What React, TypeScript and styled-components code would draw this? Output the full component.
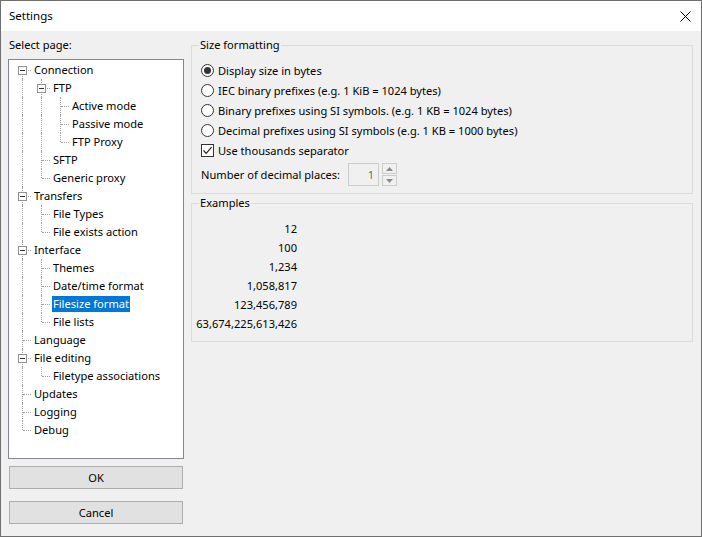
import React from 'react';
import styled, { createGlobalStyle } from 'styled-components';

type TreeNode = {
    label: string;
    children?: TreeNode[];
};

type FlatRow = {
    label: string;
    level: number;
    guides: boolean[];
    first: boolean;
    last: boolean;
    expandable: boolean;
};

const GlobalStyle = createGlobalStyle`
    html, body {
        margin: 0;
        padding: 0;
        background: #ffffff;
    }
    body {
        font-family: "Segoe UI", "Noto Sans", "Open Sans", sans-serif;
        font-size: 11.1px;
        color: #000000;
    }
`;

const Window = styled.div`
    width: 702px;
    height: 537px;
    box-sizing: border-box;
    border: 1px solid #6f6f6f;
    background: #f0f0f0;
    display: flex;
    flex-direction: column;
`;

const TitleBar = styled.div`
    height: 30px;
    background: #ffffff;
    display: flex;
    align-items: center;
    justify-content: space-between;
    padding: 0 10px 0 8px;
    flex-shrink: 0;
`;

const Title = styled.span`
    font-size: 11.5px;
    line-height: 16px;
`;

const CloseButton = styled.div`
    width: 12px;
    height: 12px;
    display: flex;
    align-items: center;
    justify-content: center;
`;

const Body = styled.div`
    flex: 1;
    display: flex;
    gap: 7px;
    padding: 6px 8px 0 7px;
`;

const LeftColumn = styled.div`
    width: 176px;
    display: flex;
    flex-direction: column;
`;

const Label = styled.div`
    line-height: 16px;
    margin: 0 0 6px 1px;
`;

const TreeBox = styled.div`
    height: 400px;
    box-sizing: border-box;
    border: 1px solid #828790;
    background: #ffffff;
    padding-top: 1px;
    overflow: hidden;
`;

const TreeRow = styled.div`
    display: flex;
    height: 18px;
    padding-left: 3px;
`;

const GuideCell = styled.div<{ $line: boolean }>`
    width: 19px;
    height: 18px;
    flex-shrink: 0;
    position: relative;

    &::before {
        content: '';
        display: ${(props) => (props.$line ? 'block' : 'none')};
        position: absolute;
        left: 10px;
        top: 0;
        bottom: 0;
        border-left: 1px dotted #a0a0a0;
    }
`;

const BranchCell = styled.div<{ $first: boolean; $last: boolean }>`
    width: 19px;
    height: 18px;
    flex-shrink: 0;
    position: relative;

    &::before {
        content: '';
        position: absolute;
        left: 10px;
        top: ${(props) => (props.$first ? '9px' : '0')};
        height: ${(props) => (props.$last || props.$first ? '9px' : '18px')};
        border-left: 1px dotted #a0a0a0;
    }

    &::after {
        content: '';
        position: absolute;
        left: 11px;
        right: 0;
        top: 9px;
        border-top: 1px dotted #a0a0a0;
    }
`;

const Expander = styled.div`
    position: absolute;
    left: 6px;
    top: 5px;
    width: 9px;
    height: 9px;
    box-sizing: border-box;
    border: 1px solid #919191;
    background: #ffffff;
    z-index: 1;

    &::after {
        content: '';
        position: absolute;
        left: 1px;
        right: 1px;
        top: 3px;
        border-top: 1px solid #333333;
    }
`;

const NodeLabel = styled.span<{ $selected: boolean }>`
    margin-left: 2px;
    padding: 0 1px;
    height: 16px;
    line-height: 16px;
    align-self: center;
    white-space: nowrap;
    background: ${(props) => (props.$selected ? '#0078d7' : 'transparent')};
    color: ${(props) => (props.$selected ? '#ffffff' : '#000000')};
`;

const DialogButton = styled.button<{ $gap: number }>`
    margin: ${(props) => props.$gap}px 1px 0 1px;
    height: 23px;
    border: 1px solid #adadad;
    background: #e1e1e1;
    font-family: inherit;
    font-size: 11.1px;
    color: #000000;
    padding: 0;
`;

const RightColumn = styled.div`
    flex: 1;
    display: flex;
    flex-direction: column;
`;

const Group = styled.fieldset<{ $bottom: number; $top: number }>`
    margin: ${(props) => props.$top}px 0 0 0;
    min-width: 0;
    border: 1px solid #dcdcdc;
    padding: 0 0 ${(props) => props.$bottom}px 9px;
`;

const Legend = styled.legend`
    padding: 0 1px;
    margin-left: -2px;
    line-height: 16px;
    font-size: 11.1px;
`;

const Options = styled.div`
    display: flex;
    flex-direction: column;
    padding-top: 7px;
`;

const OptionRow = styled.div<{ $height: number }>`
    display: flex;
    align-items: center;
    gap: 4px;
    height: ${(props) => props.$height}px;
    white-space: nowrap;
`;

const Radio = styled.span<{ $checked: boolean }>`
    width: 13px;
    height: 13px;
    flex-shrink: 0;
    box-sizing: border-box;
    border: 1px solid #333333;
    border-radius: 50%;
    background: #ffffff;
    display: flex;
    align-items: center;
    justify-content: center;

    &::after {
        content: '';
        display: ${(props) => (props.$checked ? 'block' : 'none')};
        width: 7px;
        height: 7px;
        border-radius: 50%;
        background: #333333;
    }
`;

const Checkbox = styled.span`
    width: 13px;
    height: 13px;
    flex-shrink: 0;
    box-sizing: border-box;
    border: 1px solid #333333;
    background: #ffffff;
    display: flex;
    align-items: center;
    justify-content: center;
`;

const SpinRow = styled.div`
    display: flex;
    align-items: center;
    height: 23px;
    margin-top: 2px;
`;

const SpinLabel = styled.span`
    width: 147px;
    white-space: nowrap;
`;

const SpinInput = styled.div`
    width: 31px;
    height: 23px;
    box-sizing: border-box;
    border: 1px solid #cccccc;
    background: #f0f0f0;
    color: #6d6d6d;
    text-align: right;
    padding-right: 4px;
    line-height: 21px;
`;

const SpinButtons = styled.div`
    display: flex;
    flex-direction: column;
    gap: 1px;
    margin-left: 3px;
`;

const SpinButton = styled.div`
    width: 15px;
    height: 11px;
    box-sizing: border-box;
    border: 1px solid #cccccc;
    background: #f0f0f0;
    display: flex;
    align-items: center;
    justify-content: center;
`;

const ExampleList = styled.div`
    width: 96px;
    padding-top: 8px;
    display: flex;
    flex-direction: column;
    align-items: flex-end;
`;

const ExampleValue = styled.div`
    height: 19px;
    line-height: 19px;
    white-space: nowrap;
`;

const tree: TreeNode[] = [
    {
        label: 'Connection',
        children: [
            { label: 'FTP', children: [{ label: 'Active mode' }, { label: 'Passive mode' }, { label: 'FTP Proxy' }] },
            { label: 'SFTP' },
            { label: 'Generic proxy' },
        ],
    },
    { label: 'Transfers', children: [{ label: 'File Types' }, { label: 'File exists action' }] },
    {
        label: 'Interface',
        children: [
            { label: 'Themes' },
            { label: 'Date/time format' },
            { label: 'Filesize format' },
            { label: 'File lists' },
        ],
    },
    { label: 'Language' },
    { label: 'File editing', children: [{ label: 'Filetype associations' }] },
    { label: 'Updates' },
    { label: 'Logging' },
    { label: 'Debug' },
];

// walks the tree and records, for each row, which ancestor guide lines keep going
const flatten = (nodes: TreeNode[], level: number, guides: boolean[], rows: FlatRow[]) => {
    nodes.forEach((node, i) => {
        const last = i === nodes.length - 1;
        rows.push({
            label: node.label,
            level,
            guides,
            first: level === 0 && i === 0,
            last,
            expandable: !!node.children,
        });
        if (node.children) {
            flatten(node.children, level + 1, guides.concat(!last), rows);
        }
    });
    return rows;
};

const rows = flatten(tree, 0, [], []);

const sizeOptions = [
    'Display size in bytes',
    'IEC binary prefixes (e.g. 1 KiB = 1024 bytes)',
    'Binary prefixes using SI symbols. (e.g. 1 KB = 1024 bytes)',
    'Decimal prefixes using SI symbols (e.g. 1 KB = 1000 bytes)',
];

const examples = ['12', '100', '1,234', '1,058,817', '123,456,789', '63,674,225,613,426'];

const App = () => {
    const selected = 'Filesize format';

    return (
        <>
            <GlobalStyle />
            <Window>
                <TitleBar>
                    <Title>Settings</Title>
                    <CloseButton>
                        <svg width="11" height="11" viewBox="0 0 11 11">
                            <path d="M0.5 0.5 L10.5 10.5 M10.5 0.5 L0.5 10.5" stroke="#000" strokeWidth="1" fill="none" />
                        </svg>
                    </CloseButton>
                </TitleBar>
                <Body>
                    <LeftColumn>
                        <Label>Select page:</Label>
                        <TreeBox>
                            {rows.map((row) => (
                                <TreeRow key={row.label}>
                                    {row.guides.map((g, i) => (
                                        <GuideCell key={i} $line={g} />
                                    ))}
                                    <BranchCell $first={row.first} $last={row.last}>
                                        {row.expandable && <Expander />}
                                    </BranchCell>
                                    <NodeLabel $selected={row.label === selected}>{row.label}</NodeLabel>
                                </TreeRow>
                            ))}
                        </TreeBox>
                        <DialogButton $gap={7}>OK</DialogButton>
                        <DialogButton $gap={12}>Cancel</DialogButton>
                    </LeftColumn>
                    <RightColumn>
                        <Group $top={0} $bottom={7}>
                            <Legend>Size formatting</Legend>
                            <Options>
                                {sizeOptions.map((opt, i) => (
                                    <OptionRow key={opt} $height={20}>
                                        <Radio $checked={i === 0} />
                                        <span>{opt}</span>
                                    </OptionRow>
                                ))}
                                <OptionRow $height={21}>
                                    <Checkbox>
                                        <svg width="11" height="11" viewBox="0 0 11 11">
                                            <path d="M1.5 5.5 L4.2 8.3 L9.6 2.2" stroke="#222" strokeWidth="1.2" fill="none" />
                                        </svg>
                                    </Checkbox>
                                    <span>Use thousands separator</span>
                                </OptionRow>
                                <SpinRow>
                                    <SpinLabel>Number of decimal places:</SpinLabel>
                                    <SpinInput>1</SpinInput>
                                    <SpinButtons>
                                        <SpinButton>
                                            <svg width="7" height="4" viewBox="0 0 7 4">
                                                <path d="M0 4 L3.5 0 L7 4 Z" fill="#8a8a8a" />
                                            </svg>
                                        </SpinButton>
                                        <SpinButton>
                                            <svg width="7" height="4" viewBox="0 0 7 4">
                                                <path d="M0 0 L7 0 L3.5 4 Z" fill="#8a8a8a" />
                                            </svg>
                                        </SpinButton>
                                    </SpinButtons>
                                </SpinRow>
                            </Options>
                        </Group>
                        <Group $top={1} $bottom={8}>
                            <Legend>Examples</Legend>
                            <ExampleList>
                                {examples.map((ex) => (
                                    <ExampleValue key={ex}>{ex}</ExampleValue>
                                ))}
                            </ExampleList>
                        </Group>
                    </RightColumn>
                </Body>
            </Window>
        </>
    );
};

export default App;
